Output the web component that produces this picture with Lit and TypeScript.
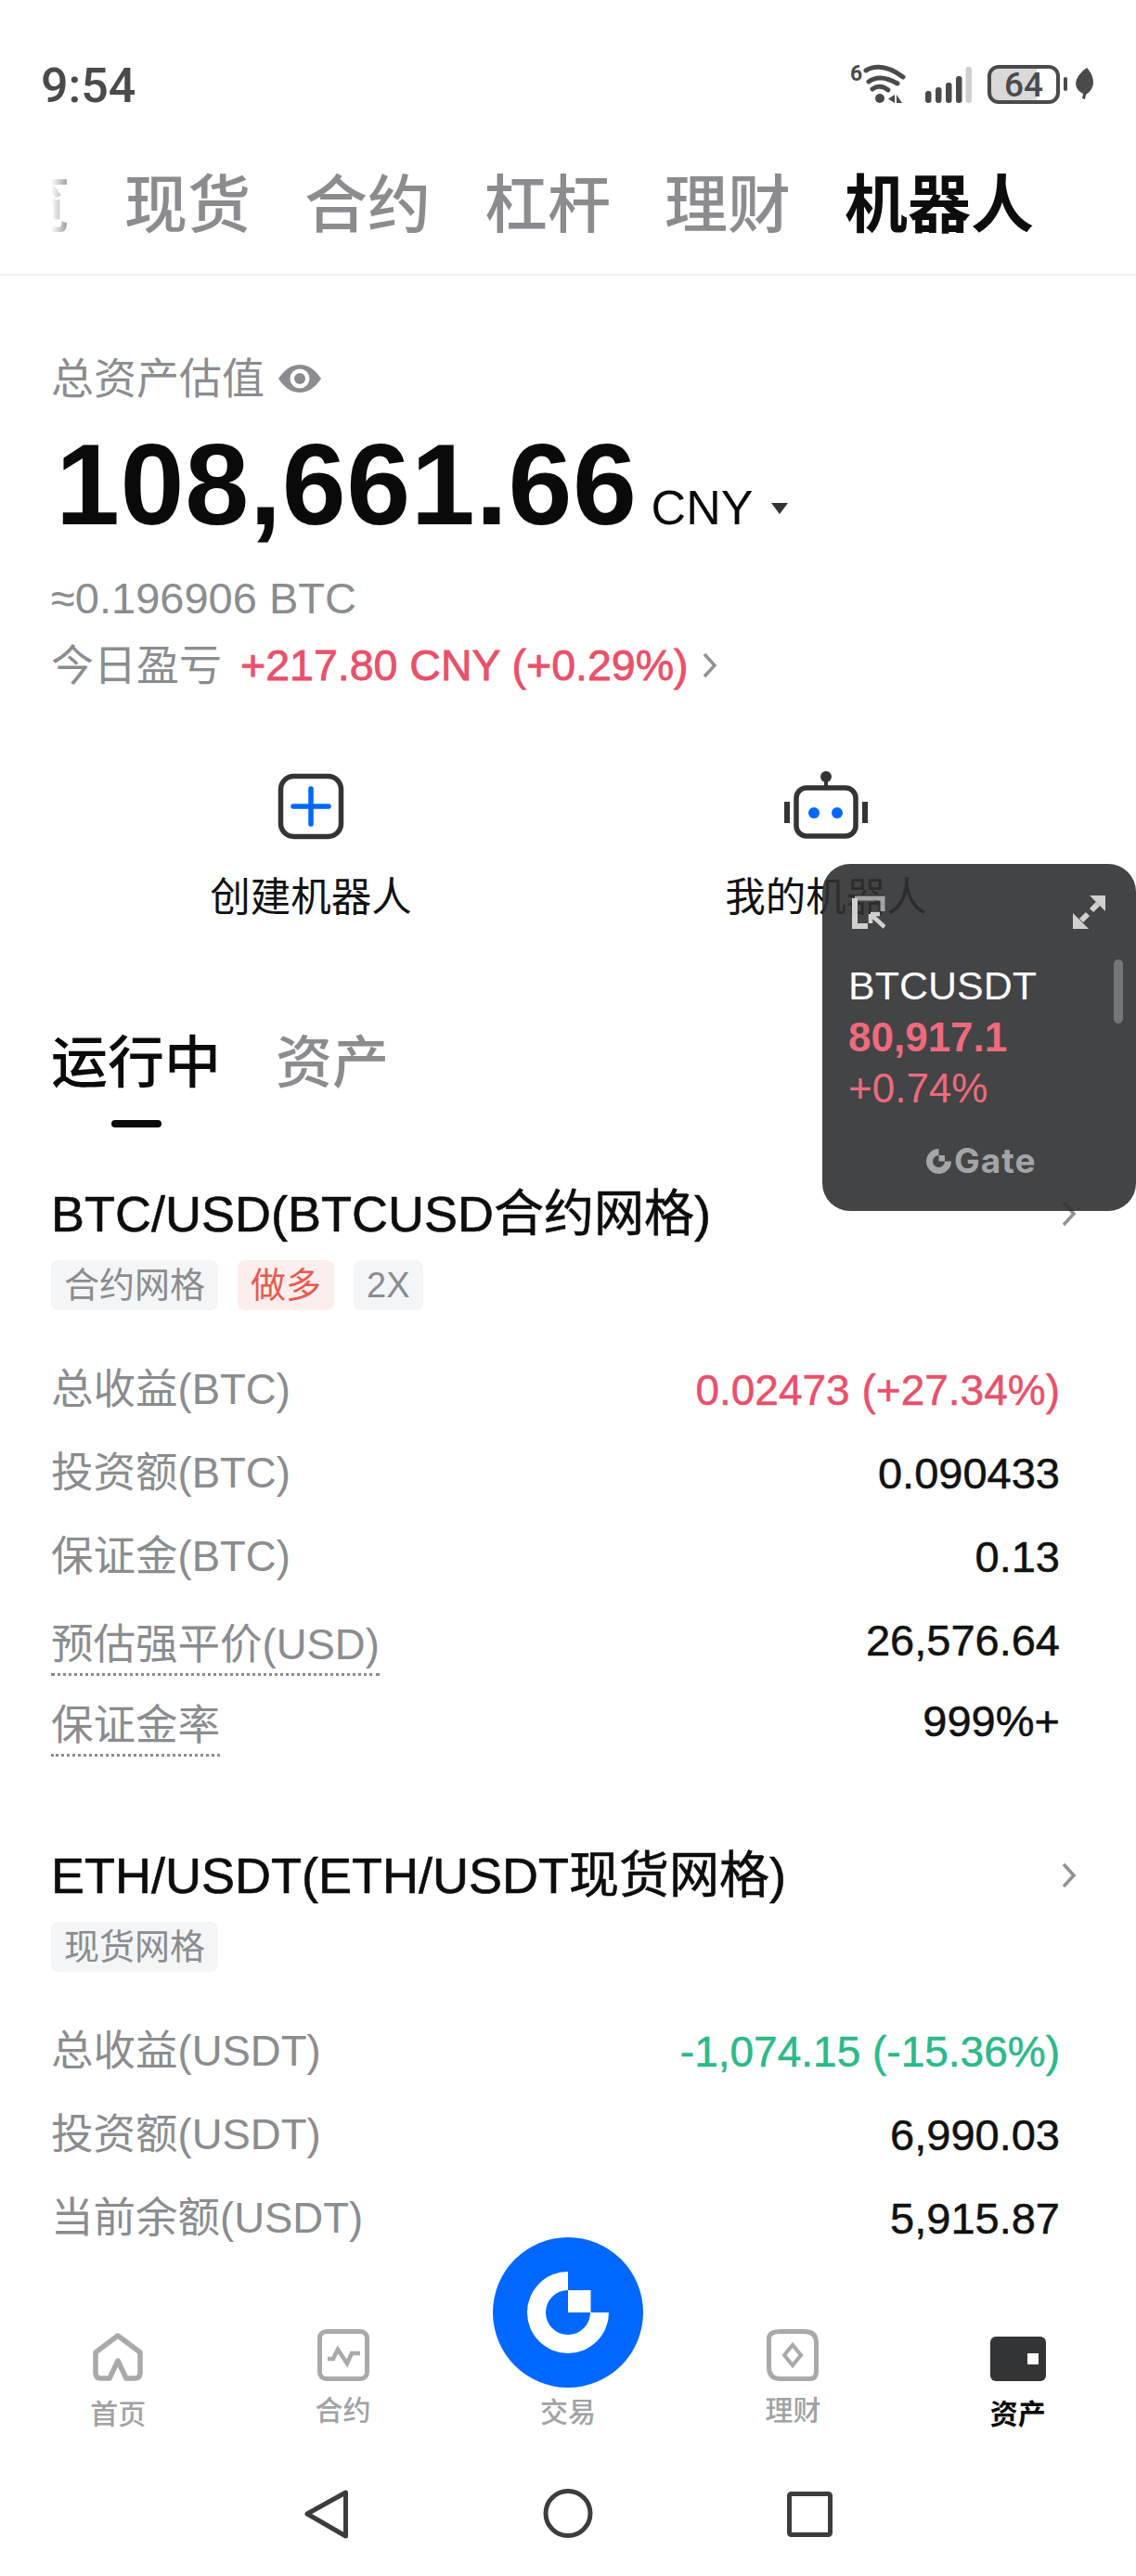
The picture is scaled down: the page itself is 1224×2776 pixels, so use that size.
import { LitElement, css, html, svg } from "lit";
import { customElement } from "lit/decorators.js";

type Row = { label: string; value: string; tone?: string; hint?: boolean };
type Bot = { title: string; tags: { text: string; tone?: string }[]; rows: Row[] };

const bots: Bot[] = [
  {
    title: "BTC/USD(BTCUSD合约网格)",
    tags: [{ text: "合约网格" }, { text: "做多", tone: "long" }, { text: "2X" }],
    rows: [
      { label: "总收益(BTC)", value: "0.02473 (+27.34%)", tone: "red" },
      { label: "投资额(BTC)", value: "0.090433" },
      { label: "保证金(BTC)", value: "0.13" },
      { label: "预估强平价(USD)", value: "26,576.64", hint: true },
      { label: "保证金率", value: "999%+", hint: true },
    ],
  },
  {
    title: "ETH/USDT(ETH/USDT现货网格)",
    tags: [{ text: "现货网格" }],
    rows: [
      { label: "总收益(USDT)", value: "-1,074.15 (-15.36%)", tone: "green" },
      { label: "投资额(USDT)", value: "6,990.03" },
      { label: "当前余额(USDT)", value: "5,915.87" },
    ],
  },
];

const chevron = svg`<path d="M3 3 L14 15 L3 27" fill="none" stroke="#8f9194" stroke-width="3.5"/>`;

const navIcons = {
  home: svg`<svg width="54" height="52" viewBox="0 0 54 52"><path d="M27 3 L51 21 V43 Q51 49 45 49 H36 L27 30 L18 49 H9 Q3 49 3 43 V21 Z" fill="none" stroke="#a8a9ab" stroke-width="5.500" stroke-linejoin="round"/></svg>`,
  futures: svg`<svg width="56" height="56" viewBox="0 0 56 56"><rect x="2.5" y="2.5" width="51" height="51" rx="7" fill="none" stroke="#a8a9ab" stroke-width="5"/><path d="M11 32 H17 L22 22 L32 37 L37 26 H46" fill="none" stroke="#a8a9ab" stroke-width="4.500"/></svg>`,
  earn: svg`<svg width="56" height="56" viewBox="0 0 56 56"><path d="M15 2.5 H41 Q53.5 2.5 53.5 15 V46 Q53.5 53.5 46 53.5 H15 Q2.5 53.5 2.5 41 V10 Q2.5 2.5 15 2.5 Z" fill="none" stroke="#a8a9ab" stroke-width="5"/><path d="M28 17 L37 28 L28 39 L19 28 Z" fill="none" stroke="#a8a9ab" stroke-width="4"/></svg>`,
  wallet: svg`<svg width="60" height="48" viewBox="0 0 60 48"><rect width="60" height="48" rx="6" fill="#333436"/><rect x="40" y="18" width="12" height="12" fill="#fff"/></svg>`,
};

const navItems = [
  { label: "首页", icon: navIcons.home, low: true },
  { label: "合约", icon: navIcons.futures },
  { label: "交易" },
  { label: "理财", icon: navIcons.earn },
  { label: "资产", icon: navIcons.wallet, low: true, active: true },
];

@customElement("app-root")
export class AppRoot extends LitElement {
  static styles = css`
    :host {
      display: block;
      position: relative;
      width: 1224px;
      height: 2776px;
      overflow: hidden;
      background: #fff;
      color: #0d0d0d;
      font-family: "Liberation Sans", "Noto Sans CJK SC", sans-serif;
    }

    .page {
      display: flex;
      flex-direction: column;
      height: 100%;
    }

    .status {
      flex: none;
      height: 184px;
      display: flex;
      align-items: center;
      justify-content: space-between;
      padding: 0 0 0 44px;
    }

    .time {
      font-family: "Roboto", sans-serif;
      font-size: 52px;
      font-weight: 500;
      color: #4a4a4a;
    }

    .tabs {
      flex: none;
      height: 113px;
      box-sizing: border-box;
      border-bottom: 2px solid #f2f2f2;
      display: flex;
      gap: 58px;
      padding: 3px 0 0 55px;
      font-size: 68px;
      line-height: 68px;
      font-weight: 500;
      color: #8a8c8f;
    }

    .tabs span.on {
      color: #0d0d0d;
      font-weight: 700;
    }

    .tabs .cut {
      width: 21px;
      height: 68px;
      overflow: hidden;
      display: flex;
      justify-content: flex-end;
      white-space: nowrap;
      -webkit-mask-image: linear-gradient(90deg, transparent, #000);
      mask-image: linear-gradient(90deg, transparent, #000);
    }

    .body {
      flex: 1;
      min-height: 0;
      overflow: hidden;
    }

    .summary {
      padding: 86px 0 0 55px;
      color: #8a8c8f;
      font-size: 46px;
    }

    .line {
      display: flex;
      align-items: center;
      gap: 15px;
    }

    .summary .title {
      height: 50px;
      line-height: 50px;
    }

    .amount {
      display: flex;
      align-items: baseline;
      height: 128px;
      margin-top: 25px;
      color: #0a0a0a;
      font-size: 52px;
      line-height: 128px;
    }

    .amount b {
      font-size: 124px;
      margin: 0 15px 0 5px;
      letter-spacing: 0.6px;
    }

    .amount svg {
      margin: 84px 0 0 20px;
      align-self: flex-start;
    }

    .approx {
      height: 50px;
      line-height: 50px;
      margin-top: 34px;
      font-size: 47px;
    }

    .today {
      height: 50px;
      line-height: 50px;
      margin-top: 22px;
      gap: 20px;
    }

    .today em {
      font-style: normal;
      font-size: 46.500px;
      -webkit-text-stroke: 0.8px #e9506a;
      color: #e9506a;
    }

    .actions {
      display: grid;
      grid-template-columns: 335px 555px;
      padding-top: 88px;
    }

    .action {
      display: flex;
      flex-direction: column;
      align-items: flex-end;
      font-size: 43.500px;
      line-height: 60px;
      color: #111;
    }

    .action > div {
      width: 226px;
      margin-right: -113px;
      display: flex;
      flex-direction: column;
      align-items: center;
      gap: 29px;
    }

    .action svg {
      height: 78px;
    }

    .switch {
      display: flex;
      gap: 59px;
      padding: 113px 0 0 55px;
      font-size: 61px;
      line-height: 72px;
      font-weight: 500;
      color: #8a8c8f;
    }

    .switch .on {
      color: #0a0a0a;
      position: relative;
    }

    .switch .on::after {
      content: "";
      position: absolute;
      left: 65px;
      top: 97px;
      width: 54px;
      height: 8px;
      border-radius: 4px;
      background: #0a0a0a;
    }

    .bot {
      padding: 0 82px 0 55px;
    }

    .bot + .bot {
      margin-top: 93px;
    }

    .list {
      margin-top: 96px;
    }

    .bot-head {
      display: flex;
      align-items: center;
      justify-content: space-between;
      height: 60px;
      font-size: 54px;
      line-height: 60px;
      -webkit-text-stroke: 0.6px #0d0d0d;
    }

    .bot-head svg {
      margin-right: -19px;
    }

    .tags {
      display: flex;
      gap: 21px;
      margin-top: 20px;
    }

    .tag {
      height: 54px;
      line-height: 54px;
      padding: 0 14px;
      border-radius: 8px;
      font-size: 38px;
      background: #f3f5f7;
      color: #8a8c8f;
    }

    .tag.long {
      background: #fdeeee;
      color: #e85a50;
    }

    .rows {
      margin-top: 41px;
    }

    .row {
      display: flex;
      align-items: center;
      justify-content: space-between;
      height: 90px;
      font-size: 46px;
      line-height: 56px;
    }

    .row label {
      color: #8a8c8f;
      font-size: 45.500px;
    }

    .row.hint {
      height: 87px;
    }

    .row:not(.hint) + .row.hint {
      margin-top: 1px;
    }

    .row.hint label {
      margin-top: 15px;
      padding-bottom: 2px;
      border-bottom: 3px dotted #8a8c8f;
    }

    .row span {
      font-size: 47px;
      -webkit-text-stroke: 0.5px currentColor;
      color: #111;
    }

    .row span.red {
      font-size: 46px;
      color: #e9506a;
    }

    .row span.green {
      font-size: 46px;
      color: #2cb98a;
    }

    .nav {
      flex: none;
      height: 332px;
      box-sizing: border-box;
      background: #fff;
      display: grid;
      grid-template-columns: repeat(5, 1fr);
      padding: 66px 6px 0;
      position: relative;
    }

    .nav-item {
      display: flex;
      flex-direction: column;
      align-items: center;
      font-size: 30px;
      line-height: 36px;
      font-weight: 500;
      color: #a0a2a4;
    }

    .nav-item .icon {
      height: 56px;
      display: flex;
      align-items: flex-end;
    }

    .nav-item .text {
      margin-top: 14px;
    }

    .nav-item.low .text {
      margin-top: 18px;
    }

    .nav-item.active {
      color: #0a0a0a;
      font-weight: 700;
    }

    .nav-item.spacer {
      padding-top: 58px;
    }

    .gate {
      position: absolute;
      left: 531px;
      top: -33px;
      width: 162px;
      height: 162px;
    }

    .sys {
      position: absolute;
      left: 0;
      bottom: 0;
      width: 1224px;
      height: 124px;
      display: block;
    }

    .float {
      position: absolute;
      left: 886px;
      top: 931px;
      width: 338px;
      height: 374px;
      box-sizing: border-box;
      border-radius: 30px;
      background: rgba(47, 48, 50, 0.9);
      color: #fff;
      font-size: 43px;
      line-height: 55px;
      padding-left: 28px;
    }

    .float .ctl {
      position: absolute;
      top: 34px;
    }

    .float .quote {
      padding-top: 104px;
    }

    .float .px {
      font-size: 44px;
      font-weight: 700;
      color: #ef6a7c;
    }

    .float .pct {
      font-size: 44px;
      color: #ef6a7c;
    }

    .float .bar {
      position: absolute;
      right: 14px;
      top: 103px;
      width: 10px;
      height: 69px;
      border-radius: 5px;
      background: #75767a;
    }

    .float .brand {
      position: absolute;
      left: 112px;
      top: 302px;
      display: flex;
      align-items: center;
      gap: 3px;
      font-family: "Inter", sans-serif;
      font-weight: 700;
      font-size: 37px;
      line-height: 36px;
      letter-spacing: 1px;
      color: #a3a5a6;
    }
  `;

  private statusIcons() {
    return html`<svg width="324" height="60" viewBox="900 62 324 60">
      <text x="916" y="87" font-family="Roboto, sans-serif" font-weight="700" font-size="23" fill="#4a4a4a">6</text>
      <g fill="none" stroke="#4a4a4a" stroke-width="5" stroke-linecap="round">
        <path d="M933 76 Q950 66 973 83"/>
        <path d="M936 88 Q948 79 967 90"/>
        <path d="M940 96 Q948 90 957 97"/>
      </g>
      <circle cx="948" cy="106" r="5" fill="#4a4a4a"/>
      <path d="M964 102 V111 L957 106.500 Z M966 102 V111 L972 111 Z" fill="#4a4a4a"/>
      <g fill="#4a4a4a">
        <rect x="997" y="98" width="6.500" height="13" rx="3"/>
        <rect x="1008" y="94" width="6.500" height="17" rx="3"/>
        <rect x="1019" y="89" width="6.500" height="22" rx="3"/>
        <rect x="1030" y="82" width="6.500" height="29" rx="3"/>
        <rect x="1040.500" y="72" width="6.500" height="39" rx="3" fill="#cfcfcf"/>
      </g>
      <path d="M1076 72 H1117 V110 H1076 Q1066 110 1066 100 V82 Q1066 72 1076 72 Z" fill="#d9d9d9"/>
      <rect x="1066" y="72" width="74" height="38" rx="10" fill="none" stroke="#4a4a4a" stroke-width="4"/>
      <text x="1103" y="104" text-anchor="middle" font-family="Roboto, sans-serif" font-weight="500" font-size="37" fill="#4a4a4a">64</text>
      <rect x="1146" y="83" width="4" height="15" rx="2" fill="#4a4a4a"/>
      <path d="M1171 73 C1181 84 1180 96 1170 102 L1169 107 L1166 106 L1167 101 C1156 95 1156 84 1171 73 Z" fill="#4a4a4a"/>
    </svg>`;
  }

  private renderBot(bot: Bot) {
    return html`<section class="bot">
      <div class="bot-head">
        <span>${bot.title}</span>
        <svg width="18" height="30" viewBox="0 0 18 30">${chevron}</svg>
      </div>
      <div class="tags">
        ${bot.tags.map((t) => html`<div class="tag ${t.tone ?? ""}">${t.text}</div>`)}
      </div>
      <div class="rows">
        ${bot.rows.map(
          (r) => html`<div class="row ${r.hint ? "hint" : ""}">
            <label>${r.label}</label>
            <span class=${r.tone ?? ""}>${r.value}</span>
          </div>`
        )}
      </div>
    </section>`;
  }

  render() {
    return html`
      <div class="page">
        <div class="status">
          <div class="time">9:54</div>
          ${this.statusIcons()}
        </div>
        <div class="tabs">
          <span class="cut">览</span>
          <span>现货</span><span>合约</span><span>杠杆</span><span>理财</span>
          <span class="on">机器人</span>
        </div>

        <div class="body">
          <div class="summary">
            <div class="line title">
              <span>总资产估值</span>
              <svg width="46" height="32" viewBox="0 0 46 32">
                <path d="M23 1 Q36 1 46 16 Q36 31 23 31 Q10 31 0 16 Q10 1 23 1 Z" fill="#8a8c8f"/>
                <circle cx="23" cy="16" r="10.500" fill="#fff"/>
                <circle cx="23" cy="16" r="6" fill="#8a8c8f"/>
              </svg>
            </div>
            <div class="amount">
              <b>108,661.66</b><span>CNY</span>
              <svg width="18" height="12" viewBox="0 0 18 12"><path d="M0 0 H18 L9 12 Z" fill="#333"/></svg>
            </div>
            <div class="approx">≈0.196906 BTC</div>
            <div class="line today">
              <span>今日盈亏</span>
              <em>+217.80 CNY (+0.29%)</em>
              <svg style="margin-left:-6px" width="18" height="30" viewBox="0 0 18 30">${chevron}</svg>
            </div>
          </div>

          <div class="actions">
            <div class="action">
              <div>
                <svg width="78" height="78" viewBox="0 0 78 78">
                  <rect x="6.500" y="6.500" width="65" height="65" rx="14" fill="none" stroke="#333436" stroke-width="5.500"/>
                  <path d="M39 20 V58 M20 39 H58" stroke="#0068ff" stroke-width="5.500" stroke-linecap="round"/>
                </svg>
                <span>创建机器人</span>
              </div>
            </div>
            <div class="action">
              <div>
                <svg width="90" height="78" viewBox="0 0 90 78">
                  <circle cx="45" cy="7" r="6" fill="#333436"/>
                  <path d="M45 10 V20" stroke="#333436" stroke-width="4"/>
                  <rect x="13" y="19" width="64" height="52" rx="11" fill="none" stroke="#333436" stroke-width="5.500"/>
                  <rect x="0" y="34" width="6" height="23" fill="#333436"/>
                  <rect x="84" y="34" width="6" height="23" fill="#333436"/>
                  <circle cx="32" cy="46" r="6" fill="#0068ff"/>
                  <circle cx="57" cy="46" r="6" fill="#0068ff"/>
                </svg>
                <span>我的机器人</span>
              </div>
            </div>
          </div>

          <div class="switch">
            <span class="on">运行中</span>
            <span>资产</span>
          </div>

          <div class="list">
            ${bots.map((b) => this.renderBot(b))}
          </div>
        </div>

        <div class="nav">
          ${navItems.map(
            (n) => html`<div class="nav-item ${n.low ? "low" : ""} ${n.active ? "active" : ""} ${n.icon ? "" : "spacer"}">
              ${n.icon ? html`<div class="icon">${n.icon}</div>` : ""}
              <div class="text">${n.label}</div>
            </div>`
          )}
          <svg class="gate" viewBox="0 0 162 162">
            <circle cx="81" cy="81" r="81" fill="#0068ff"/>
            <path fill-rule="evenodd" fill="#fff" d="M81 37 A44 44 0 1 0 125 81 H105 A24 24 0 1 1 81 57 Z"/>
            <rect x="81" y="57" width="24.500" height="24" fill="#fff"/>
          </svg>
          <svg class="sys" viewBox="0 2652 1224 124">
            <g fill="none" stroke="#3c3c3c" stroke-width="5" stroke-linejoin="round">
              <path d="M372.500 2686 V2733 L331 2709 Z"/>
              <circle cx="612" cy="2708.500" r="24"/>
              <rect x="850.500" y="2687.500" width="44" height="44" rx="2"/>
            </g>
          </svg>
        </div>
      </div>

      <div class="float">
        <svg class="ctl" style="left:32px" width="36" height="36" viewBox="0 0 36 36">
          <path d="M33 17 V3 H3" fill="none" stroke="#d0d0d0" stroke-width="5" opacity="0.7"/>
          <path d="M3 3 V33 H17" fill="none" stroke="#d0d0d0" stroke-width="6"/>
          <path d="M20 20 H30 M20 20 V30 M21 21 L35 34" fill="none" stroke="#d0d0d0" stroke-width="4.500"/>
        </svg>
        <svg class="ctl" style="left:270px" width="36" height="36" viewBox="0 0 36 36">
          <path d="M35 0 V17 L18 0 Z M0 36 V19 L17 36 Z" fill="#d0d0d0"/>
          <path d="M27 9 L20 16 M16 20 L9 27" stroke="#d0d0d0" stroke-width="6"/>
        </svg>
        <div class="quote">
          <div>BTCUSDT</div>
          <div class="px">80,917.1</div>
          <div class="pct">+0.74%</div>
        </div>
        <div class="bar"></div>
        <div class="brand">
          <svg width="27" height="27" viewBox="0 0 27 27">
            <path fill="#a3a5a6" d="M13.500 0 A13.500 13.500 0 1 0 27 13.500 H20 A6.500 6.500 0 1 1 13.500 7 Z"/>
            <rect x="13.500" y="7" width="6.500" height="6.500" fill="#a3a5a6"/>
          </svg>
          <span>Gate</span>
        </div>
      </div>
    `;
  }
}
